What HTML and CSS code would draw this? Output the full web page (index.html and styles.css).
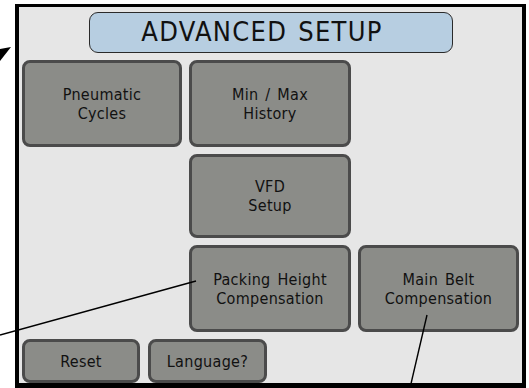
FILE: index.html
```html
<!DOCTYPE html>
<html lang="en">
<head>
    <meta charset="UTF-8">
    <title>Advanced Setup</title>
    <link rel="stylesheet" href="styles.css">
</head>
<body>
    <div class="screen">
        <div class="panel">
            <div class="title">ADVANCED SETUP</div>

            <button class="key key-pneumatic">Pneumatic<br>Cycles</button>
            <button class="key key-minmax">Min / Max<br>History</button>
            <button class="key key-vfd">VFD<br>Setup</button>
            <button class="key key-packing">Packing Height<br>Compensation</button>
            <button class="key key-belt">Main Belt<br>Compensation</button>

            <div class="bottom-row">
                <button class="key key-small key-reset">Reset</button>
                <button class="key key-small key-lang">Language?</button>
            </div>
        </div>

        <!-- callout lines drawn over the screen -->
        <svg class="callouts" width="529" height="388" viewBox="0 0 529 388">
            <polygon points="0,49 11,47 0,61" fill="#000"/>
            <line x1="0" y1="335" x2="196" y2="281" stroke="#000" stroke-width="1.4"/>
            <line x1="427" y1="315" x2="410" y2="388" stroke="#000" stroke-width="1.4"/>
        </svg>
    </div>
</body>
</html>
```

FILE: styles.css
```css
body {
    margin: 0;
    background: #fff;
    font-family: "DejaVu Sans Condensed", "DejaVu Sans", sans-serif;
    font-stretch: condensed;
    color: #111;
}

.screen {
    position: relative;
    width: 529px;
    height: 388px;
    overflow: hidden;
    padding: 4px 3px 0 15px;
    box-sizing: border-box;
}

.panel {
    height: 384px;
    box-sizing: border-box;
    border: 4px solid #000;
    border-top-width: 3px;
    border-bottom-width: 5px;
    background: #e6e6e6;
    padding: 5px 0 0 3px;
    display: grid;
    grid-template-columns: 160px 162px 161px;
    grid-template-rows: 41px 87px 84px 87px 44px;
    column-gap: 7px;
    row-gap: 7px;
}

.title {
    grid-column: 1 / 4;
    justify-self: center;
    width: 364px;
    margin-left: 1px;
    padding-right: 18px;
    box-sizing: border-box;
    background: #b7cee1;
    border: 1px solid #2a2a2a;
    border-radius: 9px;
    font-size: 27px;
    letter-spacing: 1.3px;
    word-spacing: 2px;
    text-align: center;
    line-height: 38px;
}

.key {
    margin: 0;
    padding: 0;
    box-sizing: border-box;
    background: #8b8c88;
    border: 3px solid #4b4b4b;
    border-radius: 8px;
    font-family: inherit;
    font-stretch: condensed;
    font-size: 16px;
    line-height: 19px;
    letter-spacing: 0.3px;
    word-spacing: 2px;
    color: #111;
    text-align: center;
}

.key-pneumatic { grid-column: 1; grid-row: 2; }
.key-minmax { grid-column: 2; grid-row: 2; }
.key-vfd { grid-column: 2; grid-row: 3; }
.key-packing { grid-column: 2; grid-row: 4; }
.key-belt { grid-column: 3; grid-row: 4; }

.bottom-row {
    grid-column: 1 / 3;
    grid-row: 5;
    display: flex;
    gap: 8px;
}

.key-small {
    height: 44px;
}

.key-reset { width: 118px; }
.key-lang { width: 119px; }

.callouts {
    position: absolute;
    top: 0;
    left: 0;
    pointer-events: none;
}
```
